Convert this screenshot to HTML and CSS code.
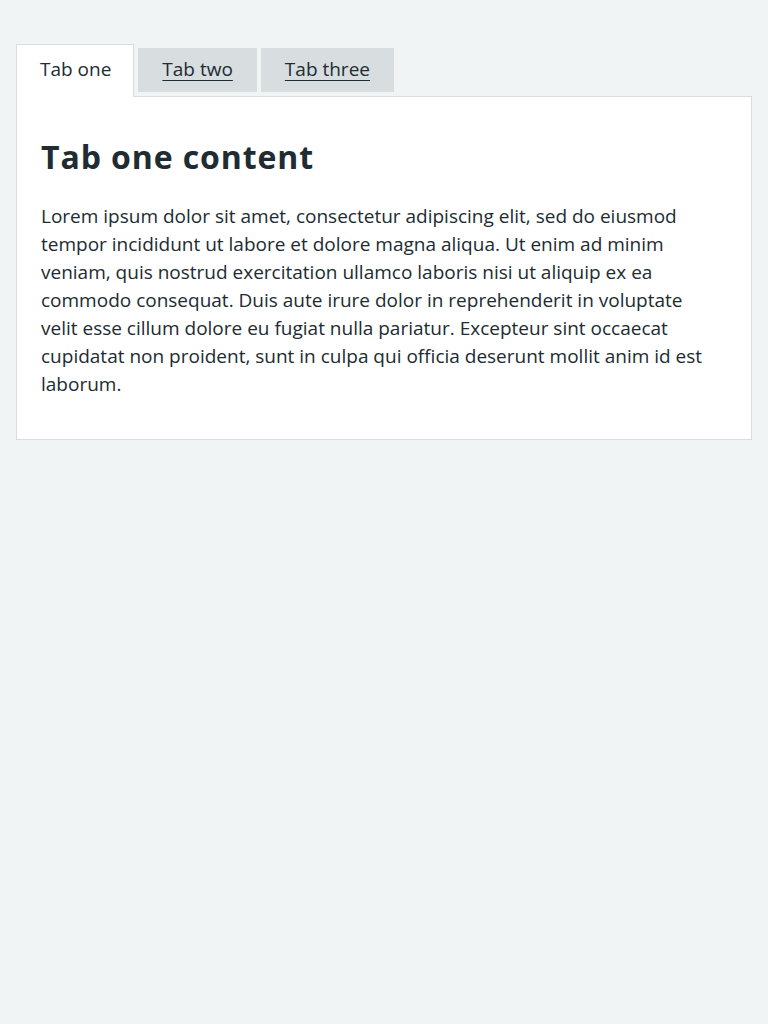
FILE: index.html
```html
<!DOCTYPE html>
<html lang="en">
<head>
<meta charset="utf-8">
<title>Tabs</title>
<link rel="stylesheet" href="styles.css">
</head>
<body>
<div class="page">
  <div class="tabs">
    <ul class="tabs-list">
      <li class="tab tab-selected"><a class="tab-link" href="#tab-one">Tab one</a></li>
      <li class="tab"><a class="tab-link" href="#tab-two">Tab two</a></li>
      <li class="tab"><a class="tab-link" href="#tab-three">Tab three</a></li>
    </ul>
    <div class="tabs-panel" id="tab-one">
      <h2 class="panel-heading">Tab one content</h2>
      <p class="panel-text">Lorem ipsum dolor sit amet, consectetur adipiscing elit, sed do eiusmod tempor incididunt ut labore et dolore magna aliqua. Ut enim ad minim veniam, quis nostrud exercitation ullamco laboris nisi ut aliquip ex ea commodo consequat. Duis aute irure dolor in reprehenderit in voluptate velit esse cillum dolore eu fugiat nulla pariatur. Excepteur sint occaecat cupidatat non proident, sunt in culpa qui officia deserunt mollit anim id est laborum.</p>
    </div>
  </div>
</div>
</body>
</html>
```
FILE: styles.css
```css
html, body {
  margin: 0;
  padding: 0;
  background: #f0f4f5;
}
body {
  font-family: "Open Sans", "Noto Sans", sans-serif;
  color: #212b32;
  -webkit-font-smoothing: antialiased;
}
.page {
  padding: 48px 16px 16px;
}
.tabs-list {
  list-style: none;
  margin: 0;
  padding: 0;
  display: flex;
  align-items: flex-start;
}
.tab {
  margin-right: 4px;
  padding: 7px 24px 9px;
  background: #d8dde0;
  font-size: 19px;
  line-height: 28px;
}
.tab-link {
  color: #212b32;
  text-decoration: underline;
  text-underline-offset: 4px;
  text-decoration-thickness: 1px;
}
.tab-selected {
  position: relative;
  margin-top: -4px;
  margin-bottom: -1px;
  padding: 10px 22px 14px 23px;
  border: 1px solid #d8dde0;
  border-bottom: 0;
  background: #ffffff;
  z-index: 1;
}
.tab-selected .tab-link {
  text-decoration: none;
}
.tabs-panel {
  background: #ffffff;
  border: 1px solid #d8dde0;
  padding: 40px 24px 41px;
}
.panel-heading {
  margin: 0 0 25px;
  font-size: 32px;
  line-height: 40px;
  font-weight: 700;
  letter-spacing: 0.9px;
}
.panel-text {
  margin: 0;
  max-width: 675px;
  font-size: 19px;
  line-height: 28px;
}
```
